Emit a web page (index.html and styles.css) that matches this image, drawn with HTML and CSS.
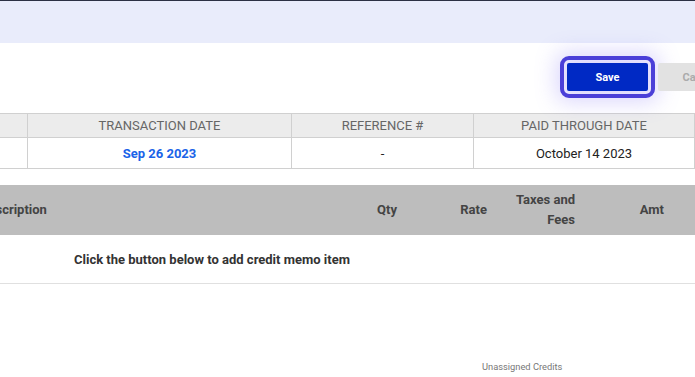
FILE: index.html
```html
<!DOCTYPE html>
<html lang="en">
<head>
    <meta charset="UTF-8">
    <meta name="viewport" content="width=device-width, initial-scale=1.0">
    <title>Credit Memo</title>
    <link rel="stylesheet" href="styles.css">
</head>
<body>

    <!-- Pasek u góry -->
    <div class="topbar"></div>

    <div class="page">
        <!-- Przyciski -->
        <div class="actions">
            <button type="button" class="btn btn-save">Save</button>
            <button type="button" class="btn btn-cancel" disabled>Cancel</button>
        </div>

        <!-- Dane transakcji -->
        <table class="info-table">
            <colgroup>
                <col class="c-no">
                <col class="c-date">
                <col class="c-ref">
                <col>
            </colgroup>
            <thead>
                <tr>
                    <th class="col-no">#</th>
                    <th>Transaction Date</th>
                    <th>Reference #</th>
                    <th>Paid Through Date</th>
                </tr>
            </thead>
            <tbody>
                <tr>
                    <td></td>
                    <td class="date-link">Sep 26 2023</td>
                    <td>-</td>
                    <td>October 14 2023</td>
                </tr>
            </tbody>
        </table>

        <!-- Pozycje noty kredytowej -->
        <table class="items-table">
            <colgroup>
                <col class="c-desc">
                <col class="c-qty">
                <col class="c-rate">
                <col class="c-tax">
                <col class="c-amt">
                <col>
            </colgroup>
            <thead>
                <tr>
                    <th class="col-desc">Description</th>
                    <th>Qty</th>
                    <th>Rate</th>
                    <th>Taxes and Fees</th>
                    <th>Amt</th>
                    <th></th>
                </tr>
            </thead>
            <tbody>
                <tr>
                    <td colspan="6" class="empty">Click the button below to add credit memo item</td>
                </tr>
            </tbody>
        </table>

        <div class="totals">
            <span class="totals-label">Unassigned Credits</span>
        </div>
    </div>

</body>
</html>
```

FILE: styles.css
```css
body {
    margin: 0;
    font-family: Roboto, "Liberation Sans", sans-serif;
    color: #222;
    overflow: hidden;
}

.topbar {
    height: 42px;
    border-top: 1px solid #2c3144;
    background-color: #e9ecfb;
}

/* strona jest przewinięta w poziomie */
.page {
    width: 800px;
    margin-left: -30px;
}

.actions {
    display: flex;
    justify-content: flex-end;
    gap: 10px;
    padding: 20px 29px 0 0;
    height: 50px;
}

.btn {
    width: 81px;
    height: 28px;
    border: none;
    border-radius: 2px;
    font-family: Roboto, "Liberation Sans", sans-serif;
    font-size: 11px;
    font-weight: bold;
}

.btn-save {
    background-color: #0029c4;
    color: white;
    outline: 4px solid #4b3fd8;
    outline-offset: 3px;
    box-shadow: 0 0 22px 10px rgba(120, 100, 245, 0.28);
}

.btn-cancel {
    width: 83px;
    background-color: #e2e2e2;
    color: #ababab;
}

.info-table {
    width: 725px;
    border-collapse: collapse;
    table-layout: fixed;
    font-size: 13px;
}

.c-no {
    width: 57px;
}

.c-date {
    width: 264px;
}

.c-ref {
    width: 182px;
}

.info-table th,
.info-table td {
    border: 1px solid #d0d0d0;
    padding: 0;
    text-align: center;
}

.info-table th {
    height: 23px;
    background-color: #ececec;
    color: #666;
    font-weight: normal;
    text-transform: uppercase;
}

.info-table td {
    height: 30px;
}

.info-table .col-no {
    color: transparent;
}

.date-link {
    color: #1a63e8;
    font-weight: bold;
}

.items-table {
    width: 800px;
    margin-top: 16px;
    border-collapse: collapse;
    table-layout: fixed;
    font-size: 13px;
}

.c-desc {
    width: 345px;
}

.c-qty {
    width: 90px;
}

.c-rate {
    width: 90px;
}

.c-tax {
    width: 88px;
}

.c-amt {
    width: 89px;
}

.items-table th {
    height: 40px;
    padding: 5px 8px;
    background-color: #bdbdbd;
    color: #444;
    line-height: 20px;
    text-align: right;
}

.items-table .col-desc {
    padding-left: 10px;
    text-align: left;
}

.items-table td {
    height: 48px;
    border-bottom: 1px solid #e0e0e0;
}

.empty {
    padding: 0 0 0 104px;
    color: #333;
    font-weight: bold;
}

.totals {
    padding: 71px 0 0 512px;
}

.totals-label {
    font-size: 9.3px;
    color: #777;
}
```
